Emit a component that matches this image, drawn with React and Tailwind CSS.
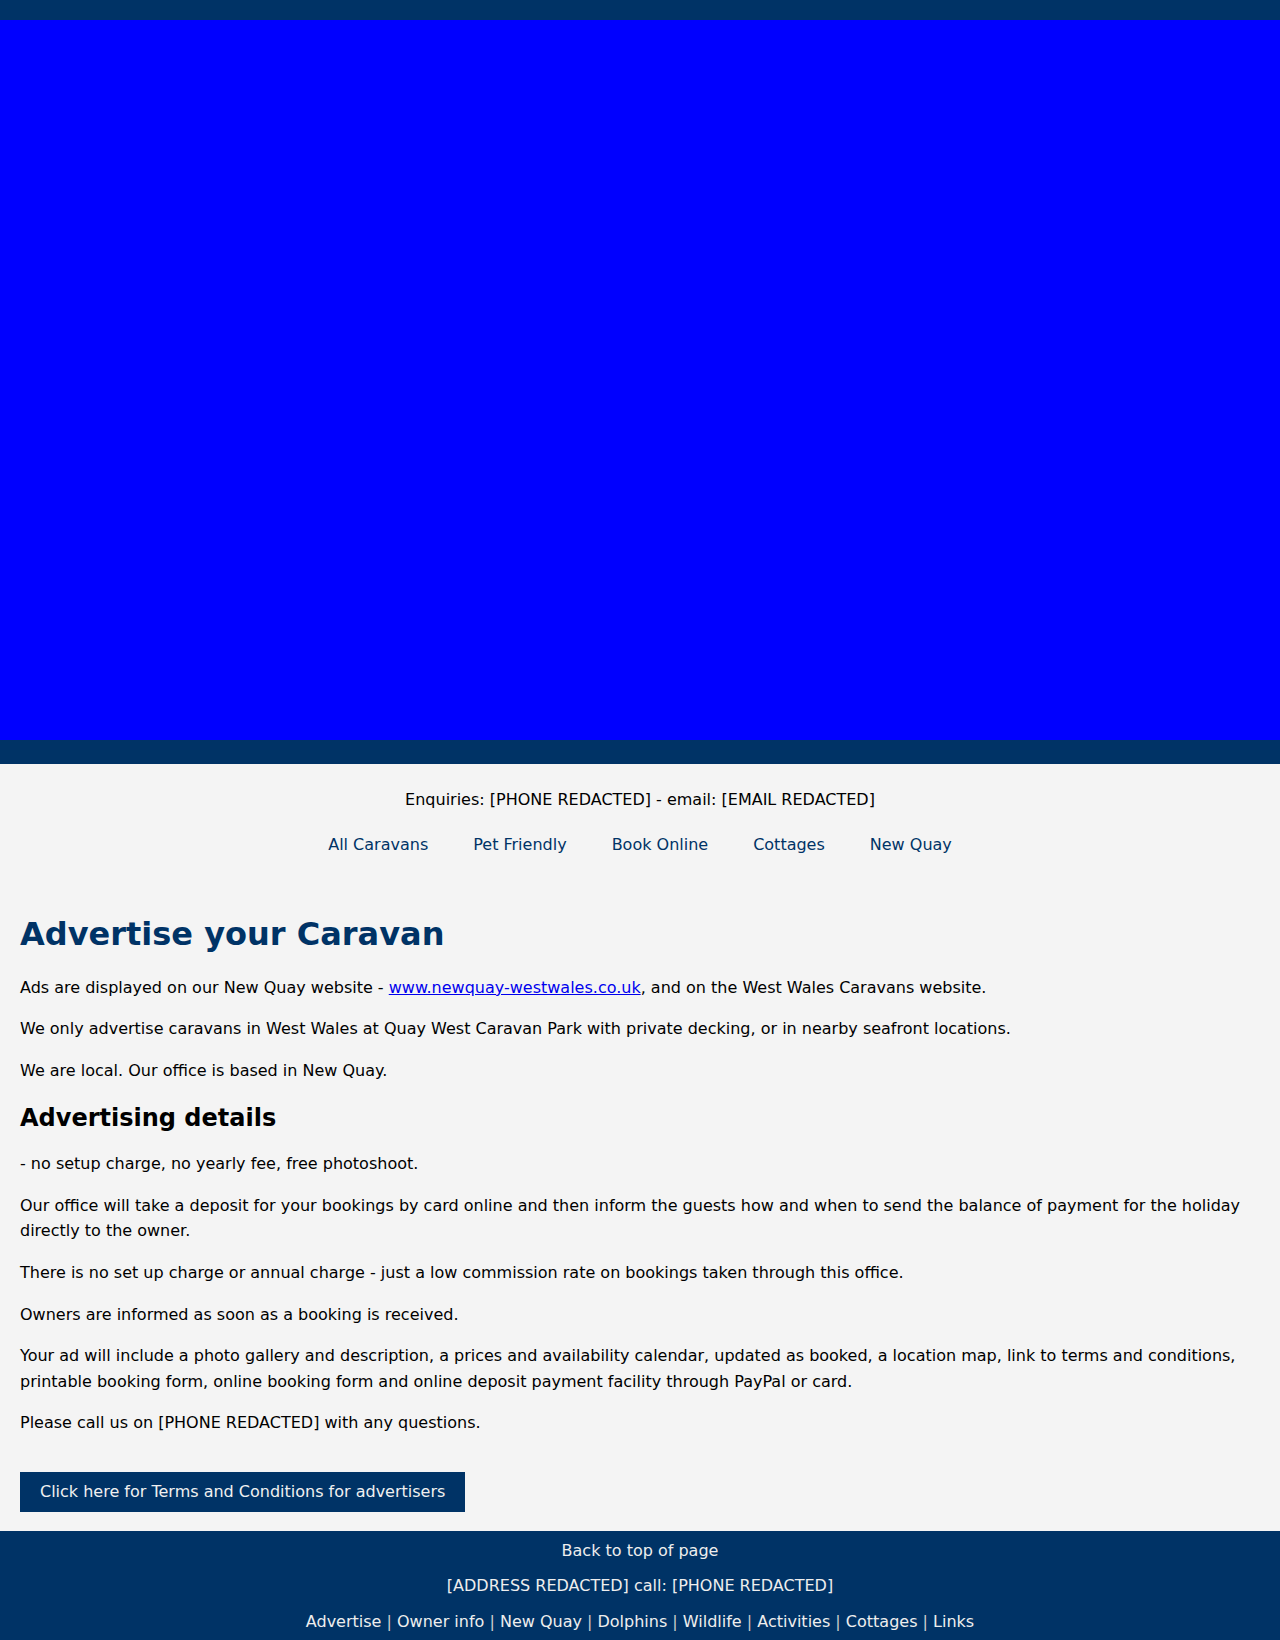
import React from "react";

const navLinks = ["All Caravans", "Pet Friendly", "Book Online", "Cottages", "New Quay"];
const footerLinks = ["Advertise", "Owner info", "New Quay", "Dolphins", "Wildlife", "Activities", "Cottages", "Links"];

const App = () => {
  return (
    <div className="min-h-screen bg-[#f4f4f4] text-black font-['DejaVu_Sans',sans-serif] text-[16px] leading-[1.6]">
      {/* top strip + banner */}
      <div className="h-[20px] bg-[#003366]" />
      <div className="h-[720px] bg-[#0000ff]" />
      <div className="h-[24px] bg-[#003366]" />

      <div className="pt-[23px] text-center">
        <p>Enquiries: [PHONE REDACTED] - email: [EMAIL REDACTED]</p>
        <nav className="mt-[19px] flex justify-center gap-[45px] text-[#003366]">
          {navLinks.map((l) => (
            <a key={l} href="#">
              {l}
            </a>
          ))}
        </nav>
      </div>

      <main className="px-[20px] pt-[58px] pb-[19px]">
        <h1 className="text-[32px] font-bold leading-[1.2] text-[#003366] mb-[21px]">
          Advertise your Caravan
        </h1>
        <p className="mb-[16px]">
          Ads are displayed on our New Quay website -{" "}
          <a href="#" className="text-[#0000ee] underline">
            www.newquay-westwales.co.uk
          </a>
          , and on the West Wales Caravans website.
        </p>
        <p className="mb-[16px]">
          We only advertise caravans in West Wales at Quay West Caravan Park with private decking, or in nearby
          seafront locations.
        </p>
        <p className="mb-[21px]">We are local. Our office is based in New Quay.</p>

        <h2 className="text-[24px] font-bold leading-[1.2] mb-[18px]">Advertising details</h2>
        <p className="mb-[16px]">- no setup charge, no yearly fee, free photoshoot.</p>
        <p className="mb-[16px]">
          Our office will take a deposit for your bookings by card online and then inform the guests how and when to
          send the balance of payment for the holiday directly to the owner.
        </p>
        <p className="mb-[16px]">
          There is no set up charge or annual charge - just a low commission rate on bookings taken through this
          office.
        </p>
        <p className="mb-[16px]">Owners are informed as soon as a booking is received.</p>
        <p className="mb-[16px]">
          Your ad will include a photo gallery and description, a prices and availability calendar, updated as booked, a
          location map, link to terms and conditions, printable booking form, online booking form and online deposit
          payment facility through PayPal or card.
        </p>
        <p className="mb-[36px]">Please call us on [PHONE REDACTED] with any questions.</p>

        <a href="#" className="inline-block bg-[#003366] text-[#f0f0f0] px-[20px] py-[7px]">
          Click here for Terms and Conditions for advertisers
        </a>
      </main>

      <footer className="bg-[#003366] text-[#eeeeee] text-center pt-[7px] pb-[20px] flex flex-col gap-[10px]">
        <a href="#">Back to top of page</a>
        <p>[ADDRESS REDACTED] call: [PHONE REDACTED]</p>
        <p>
          {footerLinks.map((l, i) => (
            <span key={l}>
              {i > 0 && <span className="text-[#cccccc]"> | </span>}
              <a href="#">{l}</a>
            </span>
          ))}
        </p>
      </footer>
    </div>
  );
};

export default App;
